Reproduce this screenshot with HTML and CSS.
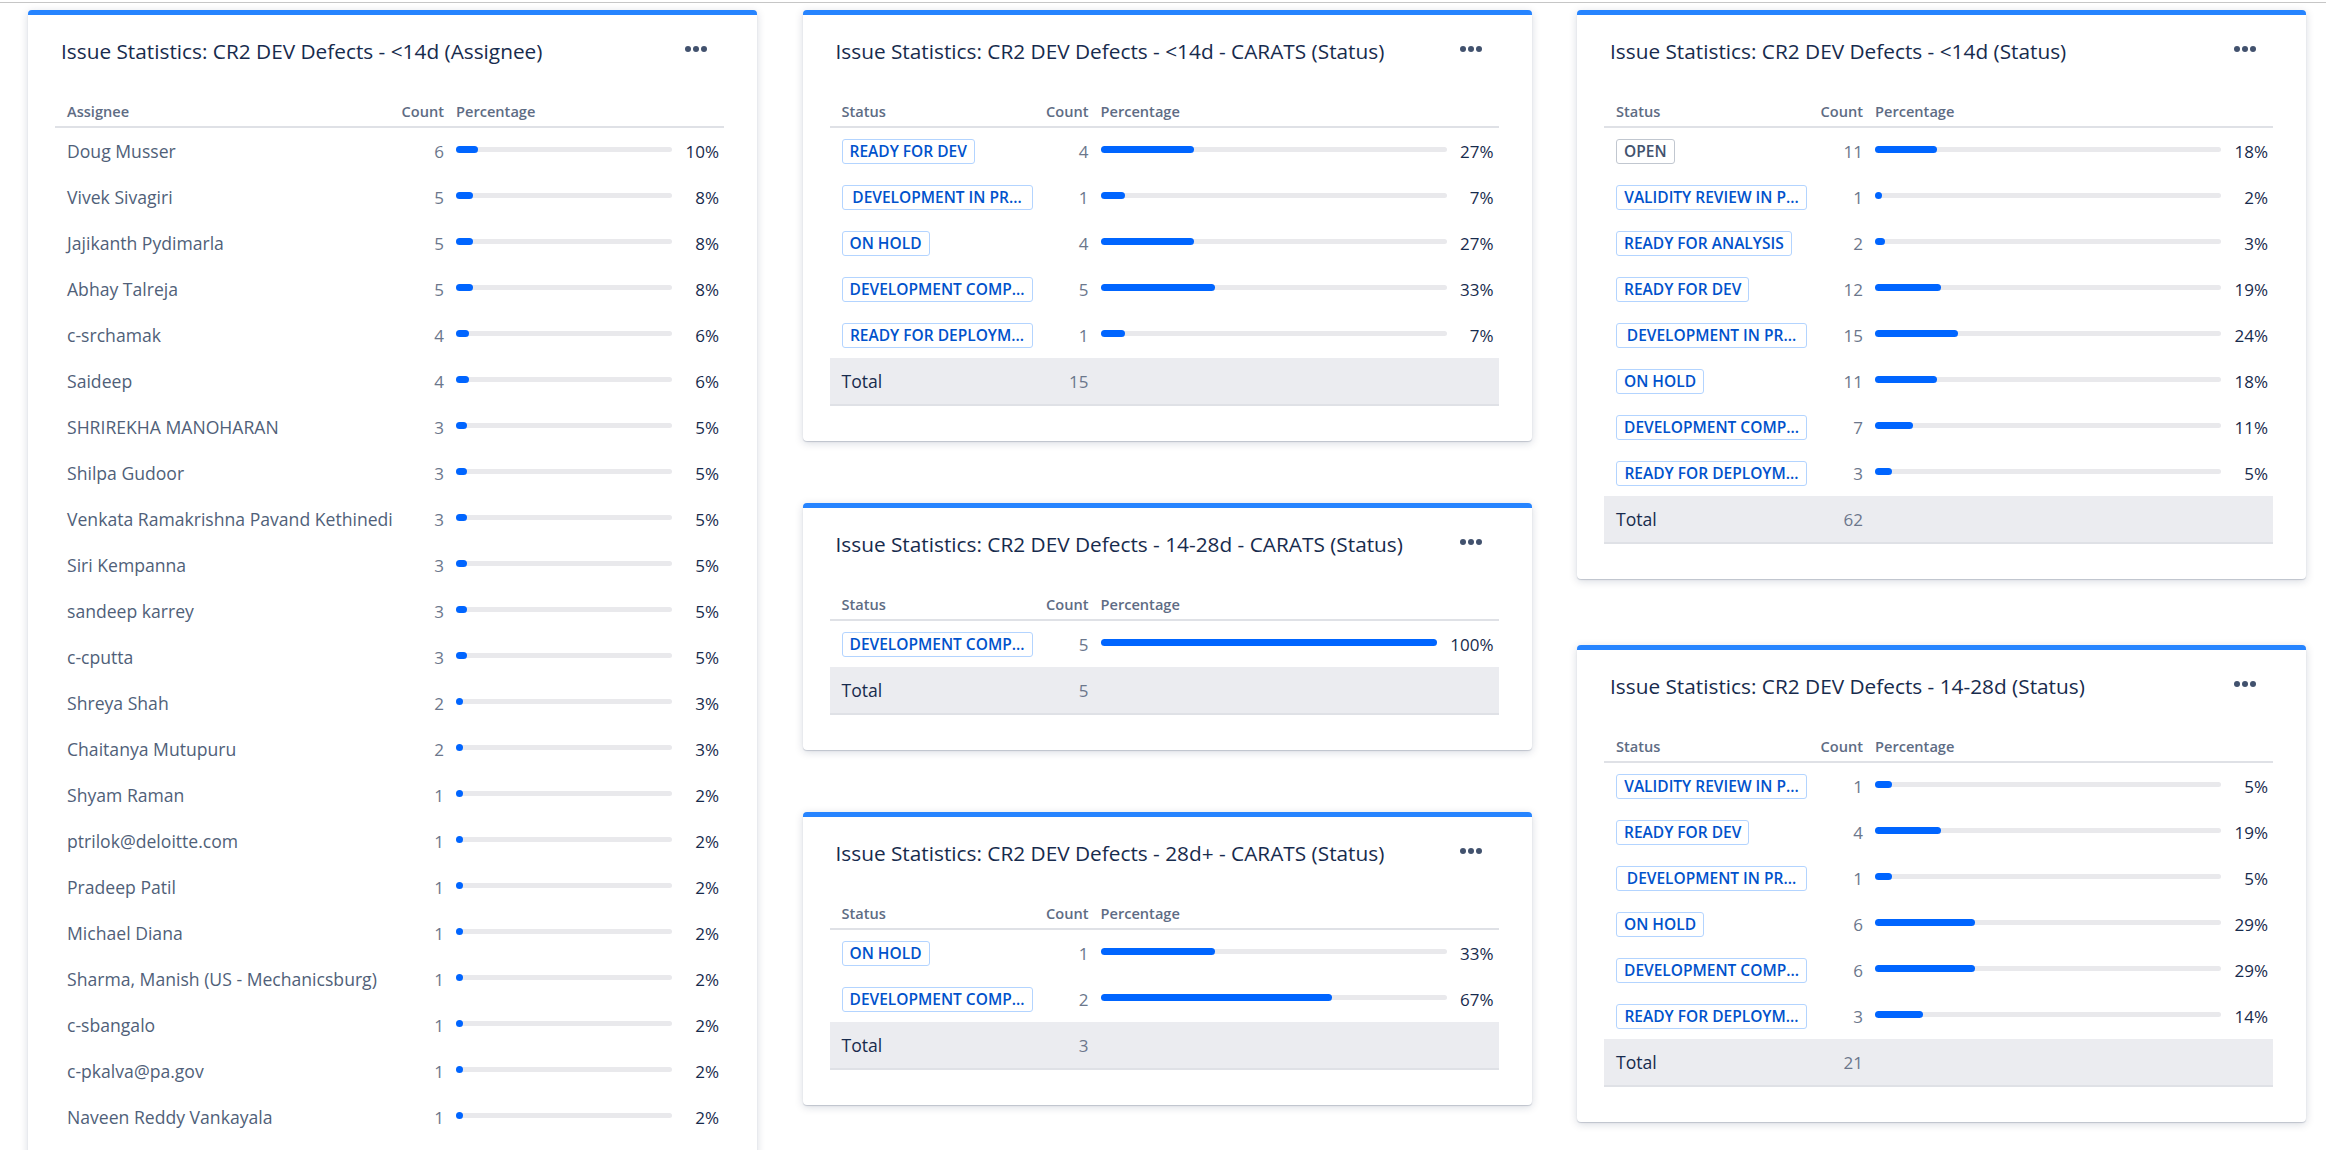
FILE: index.html
```html
<!DOCTYPE html>
<html lang="en">
<head>
<meta charset="utf-8">
<title>Dashboard</title>
<link rel="stylesheet" href="styles.css">
</head>
<body>
<div class="topline"></div>
<main class="dashboard">
  <section class="column">
    <article class="gadget">
      <header class="gadget-head">
        <h2 class="gadget-title">Issue Statistics: CR2 DEV Defects - &lt;14d (Assignee)</h2>
        <button class="more" aria-label="More"><span></span><span></span><span></span></button>
      </header>
      <table class="stats">
        <colgroup><col><col class="col-count"><col class="col-bar col-bar--short"><col class="col-pct"></colgroup>
        <thead><tr><th class="c-name">Assignee</th><th class="c-count">Count</th><th class="c-bar">Percentage</th><th class="c-pct"></th></tr></thead>
        <tbody>
          <tr><td class="c-name">Doug Musser</td><td class="c-count">6</td><td class="c-bar"><div class="track"><div class="fill" style="width:10%"></div></div></td><td class="c-pct">10%</td></tr>
          <tr><td class="c-name">Vivek Sivagiri</td><td class="c-count">5</td><td class="c-bar"><div class="track"><div class="fill" style="width:8%"></div></div></td><td class="c-pct">8%</td></tr>
          <tr><td class="c-name">Jajikanth Pydimarla</td><td class="c-count">5</td><td class="c-bar"><div class="track"><div class="fill" style="width:8%"></div></div></td><td class="c-pct">8%</td></tr>
          <tr><td class="c-name">Abhay Talreja</td><td class="c-count">5</td><td class="c-bar"><div class="track"><div class="fill" style="width:8%"></div></div></td><td class="c-pct">8%</td></tr>
          <tr><td class="c-name">c-srchamak</td><td class="c-count">4</td><td class="c-bar"><div class="track"><div class="fill" style="width:6%"></div></div></td><td class="c-pct">6%</td></tr>
          <tr><td class="c-name">Saideep</td><td class="c-count">4</td><td class="c-bar"><div class="track"><div class="fill" style="width:6%"></div></div></td><td class="c-pct">6%</td></tr>
          <tr><td class="c-name">SHRIREKHA MANOHARAN</td><td class="c-count">3</td><td class="c-bar"><div class="track"><div class="fill" style="width:5%"></div></div></td><td class="c-pct">5%</td></tr>
          <tr><td class="c-name">Shilpa Gudoor</td><td class="c-count">3</td><td class="c-bar"><div class="track"><div class="fill" style="width:5%"></div></div></td><td class="c-pct">5%</td></tr>
          <tr><td class="c-name">Venkata Ramakrishna Pavand Kethinedi</td><td class="c-count">3</td><td class="c-bar"><div class="track"><div class="fill" style="width:5%"></div></div></td><td class="c-pct">5%</td></tr>
          <tr><td class="c-name">Siri Kempanna</td><td class="c-count">3</td><td class="c-bar"><div class="track"><div class="fill" style="width:5%"></div></div></td><td class="c-pct">5%</td></tr>
          <tr><td class="c-name">sandeep karrey</td><td class="c-count">3</td><td class="c-bar"><div class="track"><div class="fill" style="width:5%"></div></div></td><td class="c-pct">5%</td></tr>
          <tr><td class="c-name">c-cputta</td><td class="c-count">3</td><td class="c-bar"><div class="track"><div class="fill" style="width:5%"></div></div></td><td class="c-pct">5%</td></tr>
          <tr><td class="c-name">Shreya Shah</td><td class="c-count">2</td><td class="c-bar"><div class="track"><div class="fill" style="width:3%"></div></div></td><td class="c-pct">3%</td></tr>
          <tr><td class="c-name">Chaitanya Mutupuru</td><td class="c-count">2</td><td class="c-bar"><div class="track"><div class="fill" style="width:3%"></div></div></td><td class="c-pct">3%</td></tr>
          <tr><td class="c-name">Shyam Raman</td><td class="c-count">1</td><td class="c-bar"><div class="track"><div class="fill" style="width:2%"></div></div></td><td class="c-pct">2%</td></tr>
          <tr><td class="c-name">ptrilok@deloitte.com</td><td class="c-count">1</td><td class="c-bar"><div class="track"><div class="fill" style="width:2%"></div></div></td><td class="c-pct">2%</td></tr>
          <tr><td class="c-name">Pradeep Patil</td><td class="c-count">1</td><td class="c-bar"><div class="track"><div class="fill" style="width:2%"></div></div></td><td class="c-pct">2%</td></tr>
          <tr><td class="c-name">Michael Diana</td><td class="c-count">1</td><td class="c-bar"><div class="track"><div class="fill" style="width:2%"></div></div></td><td class="c-pct">2%</td></tr>
          <tr><td class="c-name">Sharma, Manish (US - Mechanicsburg)</td><td class="c-count">1</td><td class="c-bar"><div class="track"><div class="fill" style="width:2%"></div></div></td><td class="c-pct">2%</td></tr>
          <tr><td class="c-name">c-sbangalo</td><td class="c-count">1</td><td class="c-bar"><div class="track"><div class="fill" style="width:2%"></div></div></td><td class="c-pct">2%</td></tr>
          <tr><td class="c-name">c-pkalva@pa.gov</td><td class="c-count">1</td><td class="c-bar"><div class="track"><div class="fill" style="width:2%"></div></div></td><td class="c-pct">2%</td></tr>
          <tr><td class="c-name">Naveen Reddy Vankayala</td><td class="c-count">1</td><td class="c-bar"><div class="track"><div class="fill" style="width:2%"></div></div></td><td class="c-pct">2%</td></tr>
        </tbody>
      </table>
    </article>
  </section>

  <section class="column column--mid">
    <article class="gadget">
      <header class="gadget-head">
        <h2 class="gadget-title">Issue Statistics: CR2 DEV Defects - &lt;14d - CARATS (Status)</h2>
        <button class="more" aria-label="More"><span></span><span></span><span></span></button>
      </header>
      <table class="stats">
        <colgroup><col><col class="col-count"><col class="col-bar"><col class="col-pct"></colgroup>
        <thead><tr><th class="c-name">Status</th><th class="c-count">Count</th><th class="c-bar">Percentage</th><th class="c-pct"></th></tr></thead>
        <tbody>
          <tr><td class="c-name"><span class="lozenge">READY FOR DEV</span></td><td class="c-count">4</td><td class="c-bar"><div class="track"><div class="fill" style="width:27%"></div></div></td><td class="c-pct">27%</td></tr>
          <tr><td class="c-name"><span class="lozenge lozenge--truncated" title="DEVELOPMENT IN PROGRESS">DEVELOPMENT IN PR...</span></td><td class="c-count">1</td><td class="c-bar"><div class="track"><div class="fill" style="width:7%"></div></div></td><td class="c-pct">7%</td></tr>
          <tr><td class="c-name"><span class="lozenge">ON HOLD</span></td><td class="c-count">4</td><td class="c-bar"><div class="track"><div class="fill" style="width:27%"></div></div></td><td class="c-pct">27%</td></tr>
          <tr><td class="c-name"><span class="lozenge lozenge--truncated" title="DEVELOPMENT COMPLETE">DEVELOPMENT COMP...</span></td><td class="c-count">5</td><td class="c-bar"><div class="track"><div class="fill" style="width:33%"></div></div></td><td class="c-pct">33%</td></tr>
          <tr><td class="c-name"><span class="lozenge lozenge--truncated" title="READY FOR DEPLOYMENT">READY FOR DEPLOYM...</span></td><td class="c-count">1</td><td class="c-bar"><div class="track"><div class="fill" style="width:7%"></div></div></td><td class="c-pct">7%</td></tr>
        </tbody>
        <tfoot><tr><td class="c-name">Total</td><td class="c-count">15</td><td class="c-bar"></td><td class="c-pct"></td></tr></tfoot>
      </table>
    </article>

    <article class="gadget">
      <header class="gadget-head">
        <h2 class="gadget-title">Issue Statistics: CR2 DEV Defects - 14-28d - CARATS (Status)</h2>
        <button class="more" aria-label="More"><span></span><span></span><span></span></button>
      </header>
      <table class="stats">
        <colgroup><col><col class="col-count"><col class="col-bar col-bar--full"><col class="col-pct col-pct--wide"></colgroup>
        <thead><tr><th class="c-name">Status</th><th class="c-count">Count</th><th class="c-bar">Percentage</th><th class="c-pct"></th></tr></thead>
        <tbody>
          <tr><td class="c-name"><span class="lozenge lozenge--truncated" title="DEVELOPMENT COMPLETE">DEVELOPMENT COMP...</span></td><td class="c-count">5</td><td class="c-bar"><div class="track"><div class="fill" style="width:100%"></div></div></td><td class="c-pct">100%</td></tr>
        </tbody>
        <tfoot><tr><td class="c-name">Total</td><td class="c-count">5</td><td class="c-bar"></td><td class="c-pct"></td></tr></tfoot>
      </table>
    </article>

    <article class="gadget">
      <header class="gadget-head">
        <h2 class="gadget-title">Issue Statistics: CR2 DEV Defects - 28d+ - CARATS (Status)</h2>
        <button class="more" aria-label="More"><span></span><span></span><span></span></button>
      </header>
      <table class="stats">
        <colgroup><col><col class="col-count"><col class="col-bar"><col class="col-pct"></colgroup>
        <thead><tr><th class="c-name">Status</th><th class="c-count">Count</th><th class="c-bar">Percentage</th><th class="c-pct"></th></tr></thead>
        <tbody>
          <tr><td class="c-name"><span class="lozenge">ON HOLD</span></td><td class="c-count">1</td><td class="c-bar"><div class="track"><div class="fill" style="width:33%"></div></div></td><td class="c-pct">33%</td></tr>
          <tr><td class="c-name"><span class="lozenge lozenge--truncated" title="DEVELOPMENT COMPLETE">DEVELOPMENT COMP...</span></td><td class="c-count">2</td><td class="c-bar"><div class="track"><div class="fill" style="width:67%"></div></div></td><td class="c-pct">67%</td></tr>
        </tbody>
        <tfoot><tr><td class="c-name">Total</td><td class="c-count">3</td><td class="c-bar"></td><td class="c-pct"></td></tr></tfoot>
      </table>
    </article>
  </section>

  <section class="column column--right">
    <article class="gadget">
      <header class="gadget-head">
        <h2 class="gadget-title">Issue Statistics: CR2 DEV Defects - &lt;14d (Status)</h2>
        <button class="more" aria-label="More"><span></span><span></span><span></span></button>
      </header>
      <table class="stats">
        <colgroup><col><col class="col-count"><col class="col-bar"><col class="col-pct"></colgroup>
        <thead><tr><th class="c-name">Status</th><th class="c-count">Count</th><th class="c-bar">Percentage</th><th class="c-pct"></th></tr></thead>
        <tbody>
          <tr><td class="c-name"><span class="lozenge lozenge--default">OPEN</span></td><td class="c-count">11</td><td class="c-bar"><div class="track"><div class="fill" style="width:18%"></div></div></td><td class="c-pct">18%</td></tr>
          <tr><td class="c-name"><span class="lozenge lozenge--truncated" title="VALIDITY REVIEW IN PROGRESS">VALIDITY REVIEW IN P...</span></td><td class="c-count">1</td><td class="c-bar"><div class="track"><div class="fill" style="width:2%"></div></div></td><td class="c-pct">2%</td></tr>
          <tr><td class="c-name"><span class="lozenge">READY FOR ANALYSIS</span></td><td class="c-count">2</td><td class="c-bar"><div class="track"><div class="fill" style="width:3%"></div></div></td><td class="c-pct">3%</td></tr>
          <tr><td class="c-name"><span class="lozenge">READY FOR DEV</span></td><td class="c-count">12</td><td class="c-bar"><div class="track"><div class="fill" style="width:19%"></div></div></td><td class="c-pct">19%</td></tr>
          <tr><td class="c-name"><span class="lozenge lozenge--truncated" title="DEVELOPMENT IN PROGRESS">DEVELOPMENT IN PR...</span></td><td class="c-count">15</td><td class="c-bar"><div class="track"><div class="fill" style="width:24%"></div></div></td><td class="c-pct">24%</td></tr>
          <tr><td class="c-name"><span class="lozenge">ON HOLD</span></td><td class="c-count">11</td><td class="c-bar"><div class="track"><div class="fill" style="width:18%"></div></div></td><td class="c-pct">18%</td></tr>
          <tr><td class="c-name"><span class="lozenge lozenge--truncated" title="DEVELOPMENT COMPLETE">DEVELOPMENT COMP...</span></td><td class="c-count">7</td><td class="c-bar"><div class="track"><div class="fill" style="width:11%"></div></div></td><td class="c-pct">11%</td></tr>
          <tr><td class="c-name"><span class="lozenge lozenge--truncated" title="READY FOR DEPLOYMENT">READY FOR DEPLOYM...</span></td><td class="c-count">3</td><td class="c-bar"><div class="track"><div class="fill" style="width:5%"></div></div></td><td class="c-pct">5%</td></tr>
        </tbody>
        <tfoot><tr><td class="c-name">Total</td><td class="c-count">62</td><td class="c-bar"></td><td class="c-pct"></td></tr></tfoot>
      </table>
    </article>

    <article class="gadget">
      <header class="gadget-head">
        <h2 class="gadget-title">Issue Statistics: CR2 DEV Defects - 14-28d (Status)</h2>
        <button class="more" aria-label="More"><span></span><span></span><span></span></button>
      </header>
      <table class="stats">
        <colgroup><col><col class="col-count"><col class="col-bar"><col class="col-pct"></colgroup>
        <thead><tr><th class="c-name">Status</th><th class="c-count">Count</th><th class="c-bar">Percentage</th><th class="c-pct"></th></tr></thead>
        <tbody>
          <tr><td class="c-name"><span class="lozenge lozenge--truncated" title="VALIDITY REVIEW IN PROGRESS">VALIDITY REVIEW IN P...</span></td><td class="c-count">1</td><td class="c-bar"><div class="track"><div class="fill" style="width:5%"></div></div></td><td class="c-pct">5%</td></tr>
          <tr><td class="c-name"><span class="lozenge">READY FOR DEV</span></td><td class="c-count">4</td><td class="c-bar"><div class="track"><div class="fill" style="width:19%"></div></div></td><td class="c-pct">19%</td></tr>
          <tr><td class="c-name"><span class="lozenge lozenge--truncated" title="DEVELOPMENT IN PROGRESS">DEVELOPMENT IN PR...</span></td><td class="c-count">1</td><td class="c-bar"><div class="track"><div class="fill" style="width:5%"></div></div></td><td class="c-pct">5%</td></tr>
          <tr><td class="c-name"><span class="lozenge">ON HOLD</span></td><td class="c-count">6</td><td class="c-bar"><div class="track"><div class="fill" style="width:29%"></div></div></td><td class="c-pct">29%</td></tr>
          <tr><td class="c-name"><span class="lozenge lozenge--truncated" title="DEVELOPMENT COMPLETE">DEVELOPMENT COMP...</span></td><td class="c-count">6</td><td class="c-bar"><div class="track"><div class="fill" style="width:29%"></div></div></td><td class="c-pct">29%</td></tr>
          <tr><td class="c-name"><span class="lozenge lozenge--truncated" title="READY FOR DEPLOYMENT">READY FOR DEPLOYM...</span></td><td class="c-count">3</td><td class="c-bar"><div class="track"><div class="fill" style="width:14%"></div></div></td><td class="c-pct">14%</td></tr>
        </tbody>
        <tfoot><tr><td class="c-name">Total</td><td class="c-count">21</td><td class="c-bar"></td><td class="c-pct"></td></tr></tfoot>
      </table>
    </article>
  </section>
</main>
</body>
</html>
```
FILE: styles.css
```css
html {
  overflow: hidden;
}

body {
  margin: 0;
  background: #ffffff;
  font-family: "Open Sans", "Noto Sans", sans-serif;
  color: #172b4d;
}

.topline {
  height: 2px;
  border-bottom: 1px solid #c6c6c6;
}

.dashboard {
  display: grid;
  grid-template-columns: repeat(3, 729px);
  column-gap: 45.5px;
  align-items: start;
  padding: 7px 0 0 28px;
}

.column {
  display: flex;
  flex-direction: column;
  gap: 64px;
}

.column--mid {
  gap: 62px;
}

.column--right {
  gap: 66px;
}

.gadget {
  background: #ffffff;
  border-top: 5px solid #2684ff;
  border-radius: 4px;
  box-shadow: 0 1px 1px rgba(9, 30, 66, 0.18), 0 2px 8px rgba(9, 30, 66, 0.17);
  padding: 0 33px 35px 27px;
}

.gadget-head {
  display: flex;
  align-items: center;
  justify-content: space-between;
  padding: 22px 17px 0 6px;
  margin-bottom: 31px;
}

.gadget-title {
  margin: 0;
  font-size: 20.8px;
  font-weight: 400;
  line-height: 28px;
  color: #172b4d;
  white-space: nowrap;
}

.more {
  display: flex;
  gap: 2px;
  margin: -4px 0 0;
  padding: 0;
  border: 0;
  background: none;
}

.more span {
  width: 6px;
  height: 6px;
  border-radius: 50%;
  background: #42526e;
}

.stats {
  width: 100%;
  border-collapse: collapse;
  table-layout: fixed;
}

.col-count { width: 55px; }
.col-bar { width: 346px; }
.col-bar--short { width: 216px; }
.col-bar--full { width: 336px; }
.col-pct { width: 52px; }
.col-pct--wide { width: 62px; }

.stats th {
  height: 30px;
  padding: 0;
  font-size: 14.6px;
  font-weight: 600;
  color: #5e6c84;
  text-align: left;
  vertical-align: middle;
  border-bottom: 2px solid #dfe1e6;
  white-space: nowrap;
}

.stats td {
  height: 46px;
  padding: 0;
  vertical-align: middle;
  white-space: nowrap;
}

.stats .c-name {
  padding-left: 12px;
  font-size: 17.6px;
  color: #505f79;
}

.stats th.c-name {
  font-size: 14.6px;
  color: #5e6c84;
}

.stats .c-count {
  text-align: right;
  padding-right: 12px;
  font-size: 17px;
  color: #6b778c;
}

.stats th.c-count {
  font-size: 14.6px;
  color: #5e6c84;
}

.stats .c-pct {
  text-align: right;
  padding-right: 5px;
  font-size: 17px;
  color: #172b4d;
}

.track {
  height: 5px;
  margin-top: -3px;
  border-radius: 3px;
  background: #e9e9ec;
}

.fill {
  height: 7px;
  position: relative;
  top: -1px;
  min-width: 7px;
  border-radius: 4px;
  background: #0065ff;
}

.stats tfoot td {
  background: #ebecf0;
  border-bottom: 2px solid #dfe1e6;
}

.stats tfoot .c-name {
  color: #172b4d;
}

.lozenge {
  display: inline-block;
  box-sizing: border-box;
  max-width: 193px;
  height: 25px;
  padding: 0 7px;
  border: 1px solid #b3d4ff;
  border-radius: 3px;
  background: #ffffff;
  font-size: 15.5px;
  font-weight: 600;
  line-height: 23px;
  color: #0052cc;
  text-transform: uppercase;
  white-space: nowrap;
  overflow: hidden;
  text-overflow: ellipsis;
  vertical-align: middle;
}

.lozenge--truncated {
  width: 191px;
  text-align: center;
}

.lozenge--default {
  border-color: #c1c7d0;
  color: #42526e;
}
```
